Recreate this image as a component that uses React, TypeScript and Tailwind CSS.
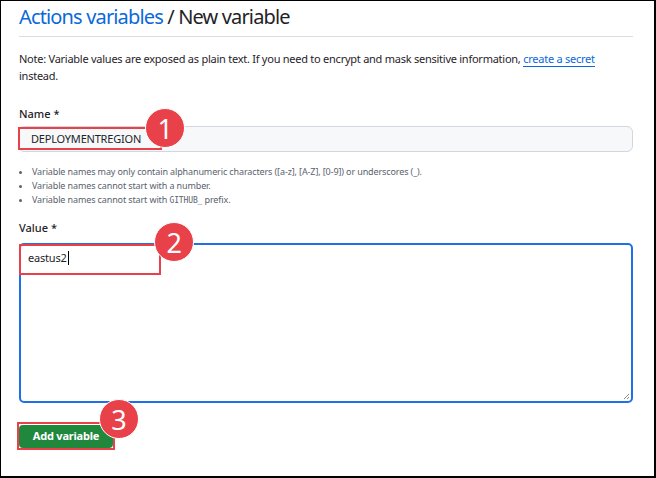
import React from "react";

const font = { fontFamily: '"Noto Sans", "Open Sans", sans-serif' };

const Badge = ({ n, className }: { n: string; className: string }) => (
  <div
    className={`absolute flex h-10 w-10 items-center justify-center rounded-full border-[1.5px] border-white bg-[#e8414a] text-[27px] leading-none text-white ${className}`}
  >
    {n}
  </div>
);

export default function App() {
  return (
    <div
      className="h-[478px] w-[656px] overflow-hidden border-t border-l border-r-2 border-b-2 border-black bg-white text-[#1f2328]"
      style={font}
    >
      {/* Header */}
      <div className="ml-[18px] w-[614px] border-b border-[#d8dee4] pt-[3px] pb-[6px]">
        <h1 className="text-[20px] leading-[26px] font-normal tracking-[-0.85px]">
          <a className="text-[#0969da]">Actions variables</a> / New variable
        </h1>
      </div>

      <div className="pl-[18px] pr-[21px]">
        <p className="mt-[13px] text-[11px] leading-[17px] tracking-[-0.25px]">
          Note: Variable values are exposed as plain text. If you need to encrypt and mask sensitive information,{" "}
          <a className="border-b border-[#0969da] text-[#0969da]">create a secret</a>
          <br />
          instead.
        </p>

        {/* Name */}
        <label className="mt-[22px] block text-[11px] leading-[16px] font-medium">Name *</label>
        <div className="relative -ml-[1px] mt-[4px] h-[26px] rounded-[6px] border border-[#d0d7de] bg-[#f6f8fa] pl-[12px] text-[11px] leading-[24px] tracking-[-0.2px]">
          DEPLOYMENTREGION
          <div className="absolute -left-[1px] top-0 h-[23px] w-[144px] border-[2.5px] border-[#e8414a]" />
          <Badge n="1" className="left-[126px] -top-[19px]" />
        </div>

        <ul className="mt-[13px] list-disc pl-[13px] text-[9px] leading-[14px] tracking-[-0.12px] text-[#59636e] marker:text-[#59636e]">
          <li>Variable names may only contain alphanumeric characters ([a-z], [A-Z], [0-9]) or underscores (_).</li>
          <li>Variable names cannot start with a number.</li>
          <li>
            Variable names cannot start with{" "}
            <span style={{ fontFamily: '"DejaVu Sans Mono", monospace' }} className="text-[8px]">GITHUB_</span> prefix.
          </li>
        </ul>

        {/* Value */}
        <label className="mt-[12px] block text-[11px] leading-[16px] font-medium">Value *</label>
        <div className="relative mt-[7px] h-[160px] rounded-[5px] border-2 border-[#1f6feb] bg-white px-[7px] py-[5px] text-[11px] leading-[16px] tracking-[-0.2px]">
          <div className="flex items-center">
            eastus2<span className="ml-[1px] h-[14px] w-px bg-black" />
          </div>
          <div className="absolute -left-[2px] -top-[1px] h-[31px] w-[142px] border-[2.5px] border-[#e8414a]" />
          <Badge n="2" className="left-[133px] -top-[23px]" />
          <svg className="absolute right-[1px] bottom-[1px]" width="7" height="7" viewBox="0 0 7 7">
            <path d="M6 1L1 6M6 4L4 6" stroke="#888" strokeWidth="1" />
          </svg>
        </div>

        {/* Button */}
        <div className="relative mt-[19px] w-[96px]">
          <div className="-ml-[2px] flex h-[28px] items-center border-[2.5px] border-[#e8414a]">
            <button className="h-[23px] w-full rounded-[4px] bg-[#1f883d] text-[11px] font-bold tracking-[-0.2px] text-white">
              Add variable
            </button>
          </div>
          <Badge n="3" className="left-[80px] -top-[23px]" />
        </div>
      </div>
    </div>
  );
}
